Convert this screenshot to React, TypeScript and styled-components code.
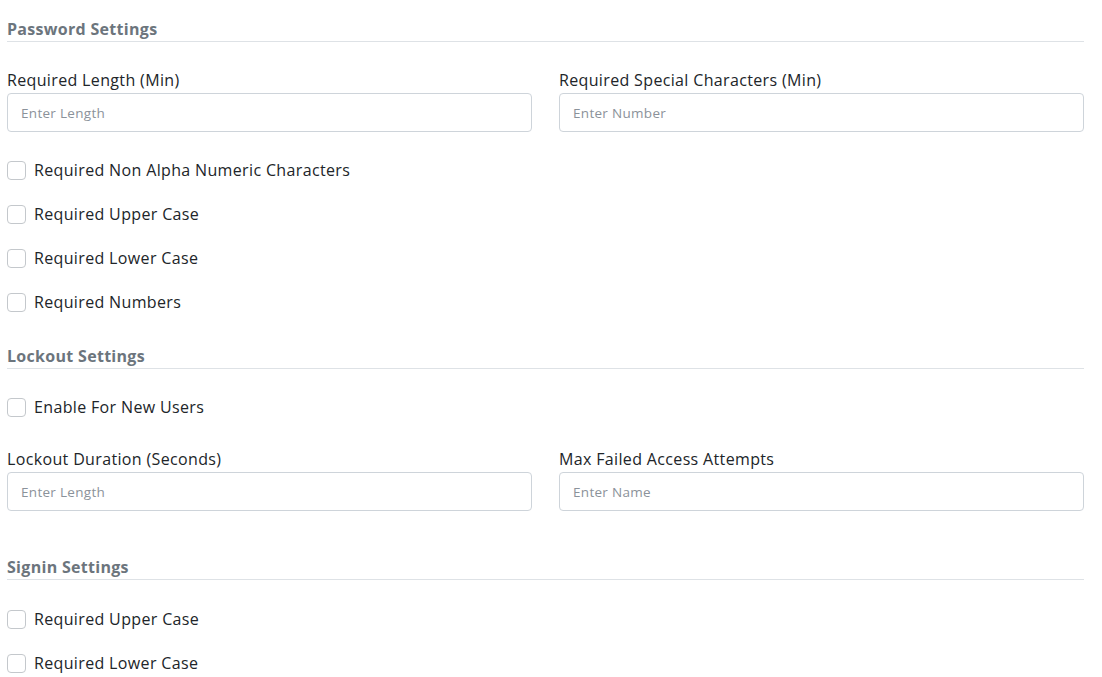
import React from "react";
import styled, { createGlobalStyle } from "styled-components";

const Global = createGlobalStyle`
  html, body { margin: 0; padding: 0; background: #ffffff; }
  body { font-family: "Open Sans", "Liberation Sans", sans-serif; }
  * { box-sizing: border-box; }
`;

const Page = styled.div`
  padding: 15px 18px 0 7px;
  display: flex;
  flex-direction: column;
`;

const SectionTitle = styled.h3<{ $top: number }>`
  margin: ${(p) => p.$top}px 0 0;
  padding-bottom: 2px;
  border-bottom: 1px solid #dee2e6;
  font-size: 16px;
  font-weight: 700;
  letter-spacing: 0.3px;
  color: #6c757d;
  line-height: 20px;
`;

const Grid = styled.div<{ $top: number }>`
  display: grid;
  grid-template-columns: 1fr 1fr;
  column-gap: 27px;
  margin-top: ${(p) => p.$top}px;
`;

const Field = styled.div`
  display: flex;
  flex-direction: column;
`;

const Label = styled.label`
  font-size: 16px;
  letter-spacing: 0.35px;
  color: #212529;
  line-height: 22px;
  margin-bottom: 2px;
`;

const Input = styled.input`
  height: 39px;
  border: 1px solid #ced4da;
  border-radius: 4px;
  padding: 0 13px;
  font-family: inherit;
  font-size: 13.5px;
  letter-spacing: 0.3px;
  color: #212529;
  outline: none;
  &::placeholder { color: #8b929a; }
`;

const CheckList = styled.div<{ $top: number }>`
  display: flex;
  flex-direction: column;
  gap: 22px;
  margin-top: ${(p) => p.$top}px;
`;

const CheckRow = styled.label`
  display: flex;
  align-items: center;
  gap: 8px;
  height: 22px;
  font-size: 16px;
  letter-spacing: 0.35px;
  color: #212529;
`;

const Box = styled.span`
  width: 19px;
  height: 19px;
  border: 1px solid #c4c8cc;
  border-radius: 4px;
  background: #fff;
  flex: none;
`;

const Check = ({ label }: { label: string }) => (
  <CheckRow>
    <Box />
    {label}
  </CheckRow>
);

export default function App() {
  return (
    <>
      <Global />
      <Page>
        <SectionTitle $top={4}>Password Settings</SectionTitle>
        <Grid $top={27}>
          <Field>
            <Label>Required Length (Min)</Label>
            <Input placeholder="Enter Length" />
          </Field>
          <Field>
            <Label>Required Special Characters (Min)</Label>
            <Input placeholder="Enter Number" />
          </Field>
        </Grid>
        <CheckList $top={27}>
          <Check label="Required Non Alpha Numeric Characters" />
          <Check label="Required Upper Case" />
          <Check label="Required Lower Case" />
          <Check label="Required Numbers" />
        </CheckList>
        <SectionTitle $top={33}>Lockout Settings</SectionTitle>
        <CheckList $top={27}>
          <Check label="Enable For New Users" />
        </CheckList>
        <Grid $top={30}>
          <Field>
            <Label>Lockout Duration (Seconds)</Label>
            <Input placeholder="Enter Length" />
          </Field>
          <Field>
            <Label>Max Failed Access Attempts</Label>
            <Input placeholder="Enter Name" />
          </Field>
        </Grid>
        <SectionTitle $top={46}>Signin Settings</SectionTitle>
        <CheckList $top={28}>
          <Check label="Required Upper Case" />
          <Check label="Required Lower Case" />
        </CheckList>
      </Page>
    </>
  );
}
